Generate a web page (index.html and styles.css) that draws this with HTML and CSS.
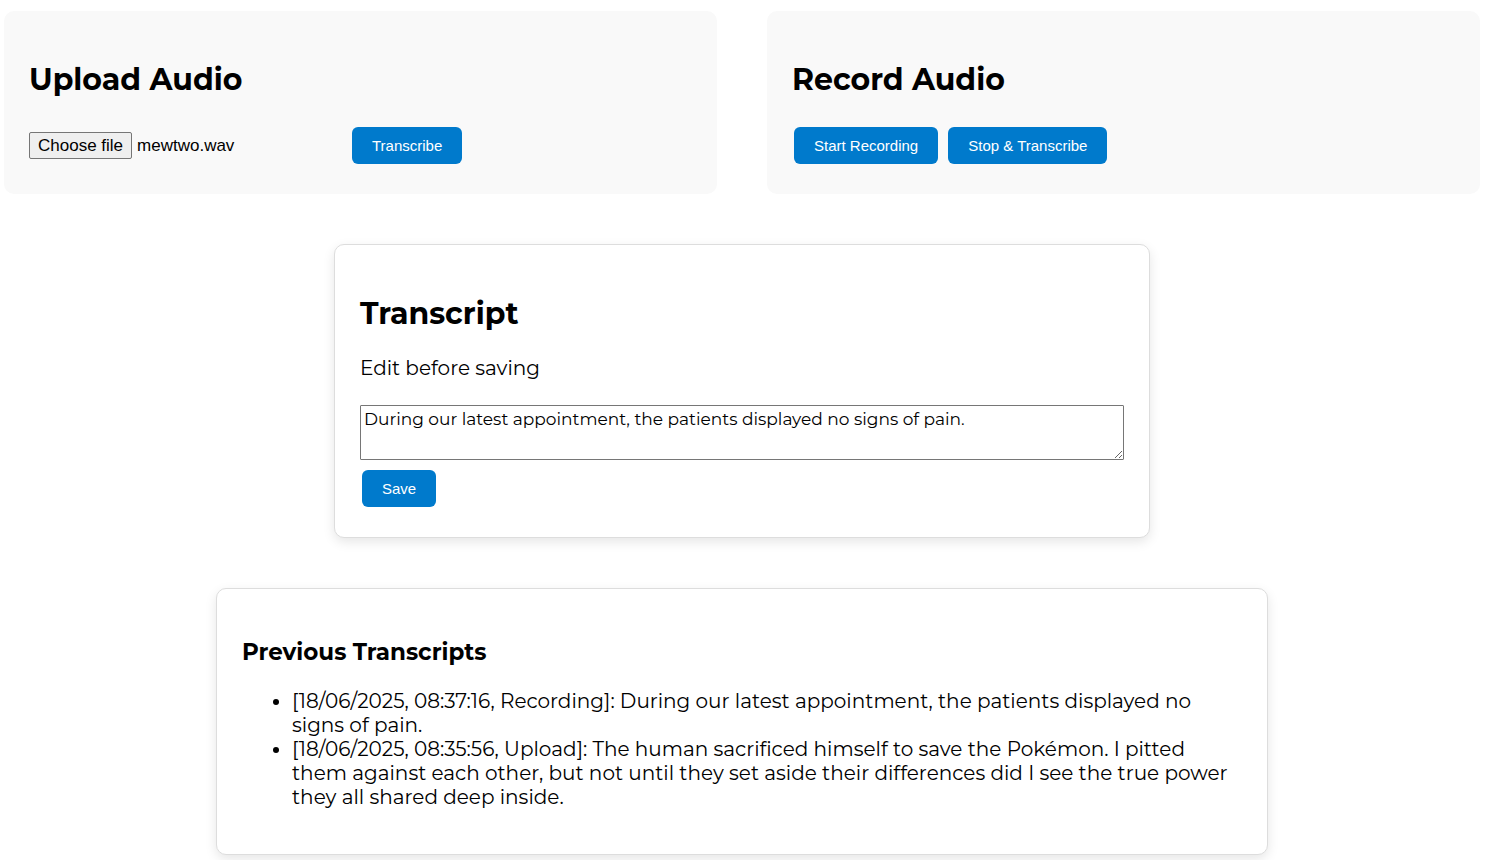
FILE: index.html
```html
<!DOCTYPE html>
<html lang="en-GB">
<head>
<meta charset="utf-8">
<meta name="viewport" content="width=device-width, initial-scale=1">
<title>Audio Transcription</title>
<link rel="stylesheet" href="styles.css">
</head>
<body>
<main class="page">
  <div class="sources">
    <section class="source">
      <h2 class="title">Upload Audio</h2>
      <form class="upload">
        <div class="file">
          <input class="file-input" type="file" id="audio" accept="audio/*">
          <label class="file-button" for="audio">Choose file</label>
          <span class="file-name">mewtwo.wav</span>
        </div>
        <button class="button" type="button">Transcribe</button>
      </form>
    </section>
    <section class="source">
      <h2 class="title">Record Audio</h2>
      <div class="actions">
        <button class="button" type="button">Start Recording</button>
        <button class="button" type="button">Stop &amp; Transcribe</button>
      </div>
    </section>
  </div>

  <section class="card transcript">
    <h2 class="title">Transcript</h2>
    <label class="hint" for="text">Edit before saving</label>
    <textarea class="editor" id="text" rows="2">During our latest appointment, the patients displayed no signs of pain.</textarea>
    <div class="actions">
      <button class="button" type="button">Save</button>
    </div>
  </section>

  <section class="card history">
    <h3 class="subtitle">Previous Transcripts</h3>
    <ul class="list">
      <li>[18/06/2025, 08:37:16, Recording]: During our latest appointment, the patients displayed no signs of pain.</li>
      <li>[18/06/2025, 08:35:56, Upload]: The human sacrificed himself to save the Pokémon. I pitted them against each other, but not until they set aside their differences did I see the true power they all shared deep inside.</li>
    </ul>
  </section>
</main>
</body>
</html>
```

FILE: styles.css
```css
* {
  box-sizing: border-box;
}

body {
  margin: 0;
  background: #fff;
  color: #000;
  font-family: Montserrat, Inter, sans-serif;
  font-size: 20px;
  line-height: 24px;
}

.page {
  display: flex;
  flex-direction: column;
  align-items: center;
  gap: 50px;
  padding: 11px 13px 5px 4px;
}

.sources {
  display: grid;
  grid-template-columns: 1fr 1fr;
  gap: 50px;
  width: 100%;
}

.source {
  padding: 25px;
  border-radius: 10px;
  background: #f9f9f9;
}

.title {
  margin: 26px 0 24px;
  font-size: 30px;
  line-height: 36px;
  font-weight: 700;
}

.upload {
  display: flex;
  align-items: center;
  padding: 5px 0;
}

.file {
  position: relative;
  display: flex;
  align-items: center;
  gap: 5px;
  width: 323px;
  font-family: Arial, "Liberation Sans", sans-serif;
  font-size: 17px;
  line-height: 19px;
}

.file-input {
  position: absolute;
  width: 1px;
  height: 1px;
  margin: 0;
  opacity: 0;
}

.file-button {
  padding: 3px 8px;
  border: 1px solid #767676;
  border-radius: 2px;
  background: #efefef;
  cursor: pointer;
}

.file-input:focus-visible + .file-button {
  outline: 2px solid #007acc;
}

.actions {
  display: flex;
  gap: 10px;
  padding: 5px 2px;
}

.button {
  padding: 10px 20px;
  border: 0;
  border-radius: 6px;
  background: #007acc;
  color: #fff;
  font-family: Arial, "Liberation Sans", sans-serif;
  font-size: 15px;
  line-height: 17px;
  cursor: pointer;
}

.card {
  width: 100%;
  padding: 25px;
  border: 1px solid #ddd;
  border-radius: 10px;
  background: #fff;
  box-shadow: 0 4px 12px rgba(0, 0, 0, 0.1);
}

.transcript {
  max-width: 816px;
}

.hint {
  display: block;
  margin-bottom: 25px;
}

.editor {
  display: block;
  width: 100%;
  height: 55px;
  margin-bottom: 5px;
  padding: 3px;
  border: 1px solid #767676;
  border-radius: 1px;
  background: #fff;
  color: #000;
  font-family: inherit;
  font-size: 17px;
  line-height: 21px;
  resize: vertical;
}

.history {
  max-width: 1052px;
}

.subtitle {
  margin: 24px 0 23px;
  font-size: 23px;
  line-height: 28px;
  font-weight: 700;
}

.list {
  margin: 0 0 20px;
  padding-left: 50px;
}
```
